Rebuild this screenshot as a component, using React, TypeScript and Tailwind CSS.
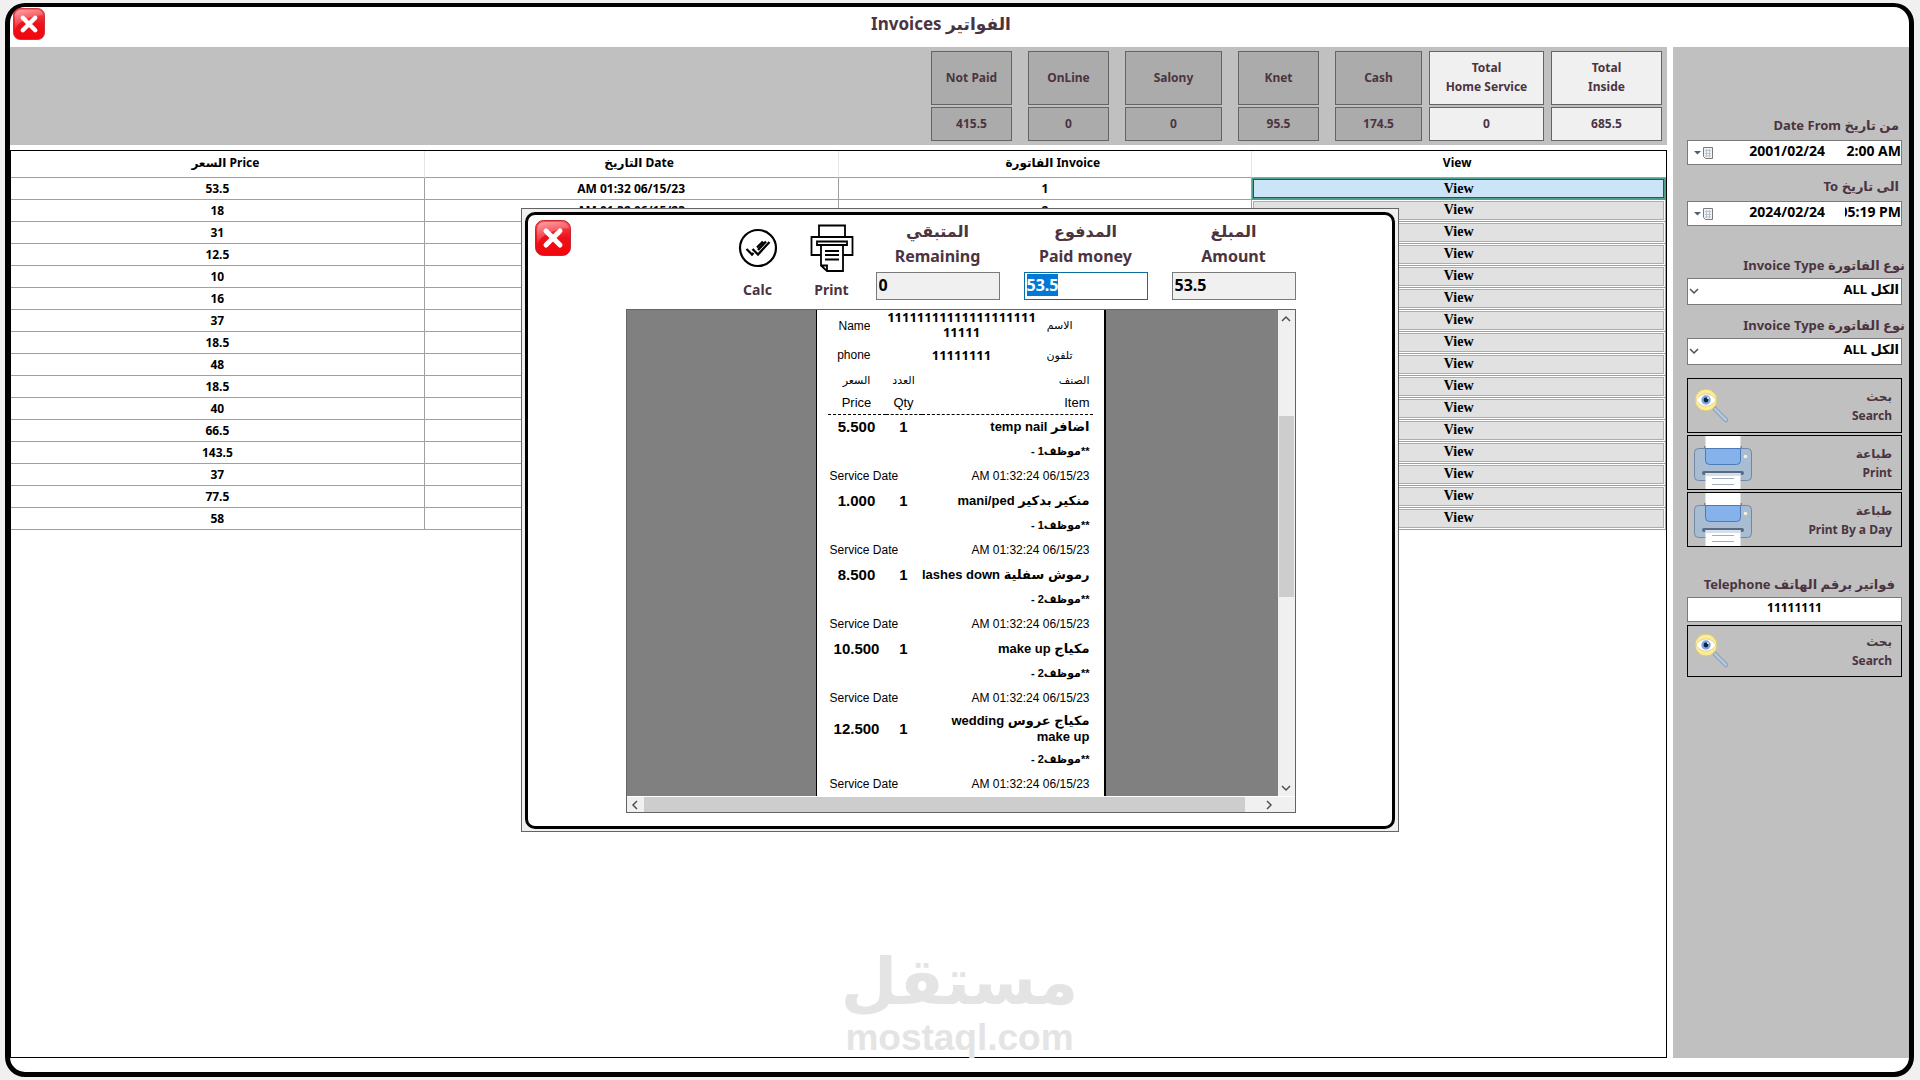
import { useEffect, useRef } from "react";
import type { ReactNode } from "react";

const totals = [
  { label: ["Not Paid"], value: "415.5", width: "w-[81px]", light: false },
  { label: ["OnLine"], value: "0", width: "w-[81px]", light: false },
  { label: ["Salony"], value: "0", width: "w-[97px]", light: false },
  { label: ["Knet"], value: "95.5", width: "w-[81px]", light: false },
  { label: ["Cash"], value: "174.5", width: "w-[87px]", light: false },
];

const grandTotals = [
  { label: ["Total", "Home Service"], value: "0", width: "w-[115px]", light: true },
  { label: ["Total", "Inside"], value: "685.5", width: "w-[111px]", light: true },
];

const prices = [
  "53.5", "18", "31", "12.5", "10", "16", "37", "18.5",
  "48", "18.5", "40", "66.5", "143.5", "37", "77.5", "58",
];

const items = [
  { name: "اضافر temp nail", price: "5.500", employee: "**موظف1 -" },
  { name: "منكير بدكير mani/ped", price: "1.000", employee: "**موظف1 -" },
  { name: "رموش سفلية lashes down", price: "8.500", employee: "**موظف2 -" },
  { name: "مكياج make up", price: "10.500", employee: "**موظف2 -" },
  { name: "مكياج عروس wedding make\u00a0up", price: "12.500", employee: "**موظف2 -", tall: true },
];

function CloseIcon() {
  return (
    <svg viewBox="0 0 36 36" preserveAspectRatio="none" className="block h-full w-full" aria-hidden="true">
      <defs>
        <linearGradient id="closeFill" x1="0" y1="0" x2="0" y2="1">
          <stop offset="0" stopColor="#f4525a" />
          <stop offset="0.5" stopColor="#ee1119" />
          <stop offset="1" stopColor="#f3050c" />
        </linearGradient>
        <linearGradient id="closeShine" x1="0" y1="0" x2="0.4" y2="1">
          <stop offset="0" stopColor="#ffb0b4" stopOpacity="0.9" />
          <stop offset="1" stopColor="#f5535a" stopOpacity="0.3" />
        </linearGradient>
      </defs>
      <rect x="0.5" y="0.5" width="35" height="35" rx="8" fill="url(#closeFill)" stroke="#c9252c" />
      <path d="M2 24V9a7 7 0 0 1 7-7h18a7 7 0 0 1 7 6C24 9 8 12 2 24Z" fill="url(#closeShine)" />
      <path d="m11 11 14 14M25 11 11 25" stroke="#fff" strokeWidth="5" strokeLinecap="round" />
    </svg>
  );
}

function SearchEyeIcon() {
  return (
    <svg viewBox="0 0 36 36" className="h-9 w-9 shrink-0" aria-hidden="true">
      <path d="m21 21 11 11" stroke="#7f97b3" strokeWidth="4.500" strokeLinecap="round" />
      <path d="m21 21 11 11" stroke="#b4c8de" strokeWidth="2.800" strokeLinecap="round" />
      <circle cx="12" cy="12" r="11" fill="#fbeb9a" stroke="#d8c777" />
      <path d="M2 12c5-8 15-8 20 0-5 8-15 8-20 0Z" fill="#fff" stroke="#d9c57a" strokeWidth="0.7" />
      <circle cx="12" cy="12" r="4.7" fill="#78a7e2" />
      <circle cx="12" cy="12" r="2.4" fill="#14213a" />
      <circle cx="14" cy="10" r="1.1" fill="#dcebff" />
    </svg>
  );
}

function PrinterIcon() {
  return (
    <svg viewBox="0 0 58 53" className="h-[53px] w-[58px] shrink-0" aria-hidden="true">
      <path d="M10 16v-6h38v6" fill="#6d8198" />
      <rect x="0.5" y="12.5" width="57" height="32" rx="4" fill="#a8bcd2" stroke="#7088a5" />
      <path d="M11.500 0h35v12h-35z" fill="#fff" />
      <path d="M11.500 12.500h35v12a4 4 0 0 1-4 4h-27a4 4 0 0 1-4-4z" fill="#86b2ec" stroke="#4c79b8" />
      <rect x="8" y="35" width="42" height="4" rx="2" fill="#566b84" />
      <path d="M11.500 37h35v16h-35z" fill="#fff" />
      <path d="M11.500 37h35v3h-35z" fill="#d7e0ea" />
      <path d="M18 42.500h22M18 48.500h22" stroke="#a3adb9" />
      <circle cx="51.500" cy="20.500" r="1.800" fill="#f6f1cf" />
    </svg>
  );
}

function CalcIcon() {
  return (
    <svg viewBox="0 0 40 40" className="h-10 w-10" fill="none" stroke="#000" aria-hidden="true">
      <circle cx="20" cy="20" r="18" strokeWidth="2.200" />
      <path d="m8.500 21 5.500 5.500 1.500-1.500M19 19.500l6-6M14.500 21l5.500 5.500L31.500 14M20 22l8-8.500" strokeWidth="2.300" />
    </svg>
  );
}

function ReceiptPrinterIcon() {
  return (
    <svg viewBox="0 0 44 48" className="h-12 w-11" fill="none" stroke="#000" strokeWidth="1.800" aria-hidden="true">
      <path d="M9 13V1.500h26V13" />
      <path d="M11 31H1.500V13h41v18H33" />
      <path d="M7 17.500h30v3.500H7z" />
      <path d="M11 21v20.500l6 5.500h16V21M11 41.500h6V47" />
      <path d="M15 27h14M15 31h14M15 35.500h14" />
    </svg>
  );
}

function CalendarIcon() {
  return (
    <svg viewBox="0 0 20 14" className="h-[14px] w-5" aria-hidden="true">
      <path d="M0 5h7L3.500 8.500z" fill="#4a5f78" />
      <path d="M9.500 1.500h9v11h-7l-2-2z" fill="#f1f1f1" stroke="#7b7b7b" />
      <path d="M11 4.500h6M11 7.500h6M11 10h6M12.500 3v8M15.500 3v8" stroke="#a9b4c4" strokeWidth="0.700" />
    </svg>
  );
}

function Chevron({ className }: { className: string }) {
  return (
    <svg viewBox="0 0 10 10" className={className} fill="none" stroke="#505050" strokeWidth="1.500" aria-hidden="true">
      <path d="m1 3 4 4 4-4" />
    </svg>
  );
}

function TotalBox({ label, value, width, light }: { label: string[]; value: string; width: string; light: boolean }) {
  const fill = light ? "bg-[#f0f0f0]" : "bg-[#ababab]";
  return (
    <div className={`${width} flex flex-col gap-[2px] text-center text-xs font-bold text-[#4b3440]`}>
      <div className={`${fill} flex h-[54px] flex-col items-center justify-center border border-[#646464] pb-[2px] leading-[19px]`}>
        {label.map((line) => (
          <span key={line}>{line}</span>
        ))}
      </div>
      <div className={`${fill} flex h-[34px] items-center justify-center border border-[#646464] pb-px`}>{value}</div>
    </div>
  );
}

function DateField({ id, label, date, time }: { id: string; label: string; date: string; time: string }) {
  return (
    <div>
      <label htmlFor={id} className="mb-[5px] block h-5 pr-[6px] text-right text-[13px] leading-5 font-bold text-[#4b3440]">
        {label}
      </label>
      <div className="mr-[3px] flex h-[25px] items-center border border-[#7a7a7a] bg-white pl-[6px] text-sm font-bold">
        <button type="button" aria-label="Open calendar">
          <CalendarIcon />
        </button>
        <input id={id} defaultValue={date} className="min-w-0 flex-1 pr-5 pb-1 text-right outline-none" />
        <span className="flex w-14 justify-end overflow-hidden">
          <input aria-label={`${label} time`} defaultValue={time} className="w-20 shrink-0 pb-1 text-right outline-none" />
        </span>
      </div>
    </div>
  );
}

function TypeField({ id }: { id: string }) {
  return (
    <div>
      <label htmlFor={id} className="mb-[3px] block h-5 text-right text-[13px] leading-5 font-bold whitespace-nowrap text-[#4b3440]">
        Invoice Type نوع الفاتورة
      </label>
      <div className="relative mr-[3px]">
        <select
          id={id}
          dir="rtl"
          className="block h-[27px] w-full appearance-none border border-[#7a7a7a] bg-white pr-[2px] pb-1 text-[13px] font-bold outline-none"
        >
          <option>الكل ALL</option>
        </select>
        <Chevron className="pointer-events-none absolute top-2 left-[2px] h-[10px] w-[10px]" />
      </div>
    </div>
  );
}

function SideButton({ arabic, english, icon, height }: { arabic: string; english: string; icon: ReactNode; height: string }) {
  return (
    <button
      type="button"
      className={`${height} mr-[3px] flex items-center justify-between overflow-hidden border border-black pr-[9px] pl-[6px] text-right text-xs leading-[19px] font-bold text-[#4b3440]`}
    >
      {icon}
      <span className="flex flex-col">
        <span>{arabic}</span>
        <span>{english}</span>
      </span>
    </button>
  );
}

function Sidebar() {
  return (
    <aside className="flex w-[236px] shrink-0 flex-col bg-[#c0c0c0] pt-[68px] pr-1 pl-[14px]">
      <DateField id="from" label="Date From من تاريخ" date="2001/02/24" time="12:00 AM" />
      <div className="mt-[11px]">
        <DateField id="to" label="To الى تاريخ" date="2024/02/24" time="05:19 PM" />
      </div>
      <div className="mt-[29px] flex flex-col gap-[10px]">
        <TypeField id="type" />
        <TypeField id="subtype" />
      </div>
      <div className="mt-[13px] flex flex-col gap-[2px]">
        <SideButton arabic="بحث" english="Search" icon={<SearchEyeIcon />} height="h-[55px]" />
        <SideButton arabic="طباعة" english="Print" icon={<PrinterIcon />} height="h-[55px]" />
        <SideButton arabic="طباعة" english="Print By a Day" icon={<PrinterIcon />} height="h-[55px]" />
      </div>
      <div className="mt-[27px] mb-[3px] flex flex-col">
        <label htmlFor="phone" className="mb-[3px] h-5 pr-[10px] text-right text-[13px] leading-5 font-bold whitespace-nowrap text-[#4b3440]">
          Telephone فواتير برقم الهاتف
        </label>
        <input
          id="phone"
          defaultValue="11111111"
          className="mr-[3px] h-[25px] border border-[#7a7a7a] bg-white pb-1 text-center text-xs font-bold outline-none"
        />
      </div>
      <SideButton arabic="بحث" english="Search" icon={<SearchEyeIcon />} height="h-[52px]" />
    </aside>
  );
}

function InvoiceTable() {
  return (
    <table className="w-full table-fixed border-separate border-spacing-0 text-center text-xs font-bold">
      <thead>
        <tr>
          {["السعر Price", "التاريخ Date", "الفاتورة Invoice"].map((title) => (
            <th key={title} className="h-[27px] border-r border-b border-r-[#e5e5e5] border-b-[#a0a0a0] p-0 pb-[2px] pl-4 leading-4">
              {title}
            </th>
          ))}
          <th className="border-b border-[#a0a0a0] p-0 pr-1 pb-[2px] leading-4">View</th>
        </tr>
      </thead>
      <tbody>
        {prices.map((price, i) => (
          <tr key={i}>
            <td className="h-[22px] border-r border-b border-[#a0a0a0] p-0 leading-4">{price}</td>
            <td className="border-r border-b border-[#a0a0a0] p-0 leading-4">AM 01:32 06/15/23</td>
            <td className="border-r border-b border-[#a0a0a0] p-0 leading-4">{i + 1}</td>
            <td className={i === 0 ? "border-r border-b border-[#4da08c] bg-[#4da08c] p-px" : "border-r border-b border-[#a0a0a0] p-px"}>
              <button
                type="button"
                className={
                  i === 0
                    ? "block h-[19px] w-full border border-[#006666] bg-[#cce4f7] font-['Liberation_Serif',serif] text-sm leading-4"
                    : "block h-[19px] w-full border border-[#adadad] bg-[#e1e1e1] pb-[2px] font-['Liberation_Serif',serif] text-sm leading-[14px]"
                }
              >
                View
              </button>
            </td>
          </tr>
        ))}
      </tbody>
    </table>
  );
}

function Receipt() {
  return (
    <div className="h-full w-[290px] shrink-0 overflow-hidden border-r-2 border-l border-black bg-white px-[11px] font-['Liberation_Sans','DejaVu_Sans',sans-serif] text-xs">
      <div className="grid grid-cols-[43px_1fr_52px] items-center whitespace-nowrap">
        <span className="text-right">Name</span>
        <span className="h-[31px] pl-3 text-center font-['Noto_Sans',sans-serif] text-[13px] leading-[15px] font-bold">
          11111111111111111111
          <br />
          11111
        </span>
        <span className="pr-5 text-right text-[11px]">الاسم</span>
        <span className="text-right">phone</span>
        <span className="h-7 pl-3 text-center font-['Noto_Sans',sans-serif] text-[13px] leading-7 font-bold">11111111</span>
        <span className="pr-5 text-right text-[11px]">تلفون</span>
      </div>
      <table className="w-full table-fixed border-collapse">
        <colgroup>
          <col className="w-[58px]" />
          <col className="w-9" />
          <col />
        </colgroup>
        <thead className="border-b border-dashed border-black text-[13px] font-normal">
          <tr className="h-[22px] text-[11px]">
            <td className="text-center">السعر</td>
            <td className="text-center">العدد</td>
            <td className="pr-[3px] text-right">الصنف</td>
          </tr>
          <tr className="h-[23px]">
            <th className="font-normal">Price</th>
            <th className="font-normal">Qty</th>
            <th className="pr-[3px] text-right font-normal">Item</th>
          </tr>
        </thead>
        {items.map((item) => (
          <tbody key={item.name}>
            <tr className={item.tall ? "h-[37px] font-bold" : "h-[25px] font-bold"}>
              <td className="p-0 text-center text-[15px] leading-4">{item.price}</td>
              <td className="p-0 text-center text-[15px] leading-4">1</td>
              <td dir="rtl" className="p-0 pr-[3px] text-right text-[13px] leading-4">
                {item.name}
              </td>
            </tr>
            <tr className="h-[25px]">
              <td colSpan={3} dir="rtl" className="p-0 pr-[3px] text-right text-[11px] font-bold">
                {item.employee}
              </td>
            </tr>
            <tr className="h-6">
              <td colSpan={2} className="p-0 pl-[2px]">Service Date</td>
              <td className="p-0 pr-[3px] text-right">AM 01:32:24 06/15/23</td>
            </tr>
          </tbody>
        ))}
      </table>
    </div>
  );
}

function PaymentDialog() {
  const paidRef = useRef<HTMLInputElement>(null);

  useEffect(() => {
    paidRef.current?.focus();
    paidRef.current?.select();
  }, []);

  const caption = "flex flex-col text-center text-base leading-[25px] font-bold text-[#4b3440]";
  const box = "mt-[3px] block h-7 w-[124px] border px-[2px] pb-[2px] text-left text-base font-bold text-black outline-none";

  return (
    <div
      role="dialog"
      aria-label="Payment"
      className="absolute top-[201px] left-1/2 w-[878px] -translate-x-1/2 border border-[#646464] bg-[#f0f0f0] px-[3px] pt-[3px] pb-[2px]"
    >
      <div className="rounded-[10px] border-[3px] border-black bg-white pr-24 pb-[13px]">
        <div className="flex h-[94px] items-start pl-[7px]">
          <button type="button" aria-label="Close payment" className="mt-[5px] h-9 w-9">
            <CloseIcon />
          </button>
          <div className="ml-auto flex gap-[14px] pt-[9px] pr-[14px]">
            <button type="button" className="flex w-[60px] flex-col items-center gap-2 text-sm font-bold text-[#4b3440]">
              <span className="flex h-12 items-center">
                <CalcIcon />
              </span>
              <span className="leading-5">Calc</span>
            </button>
            <button type="button" className="flex w-[60px] flex-col items-center gap-2 text-sm font-bold text-[#4b3440]">
              <ReceiptPrinterIcon />
              <span className="leading-5">Print</span>
            </button>
          </div>
          <div className="flex gap-6 pt-1">
            <label className={caption}>
              <span>المتبقي</span>
              <span>Remaining</span>
              <input readOnly defaultValue="0" className={`${box} border-[#7a7a7a] bg-[#f0f0f0]`} />
            </label>
            <label className={caption}>
              <span>المدفوع</span>
              <span>Paid money</span>
              <input
                ref={paidRef}
                defaultValue="53.5"
                className={`${box} border-[#0a6f9e] bg-white selection:bg-[#0078d7] selection:text-white`}
              />
            </label>
            <label className={caption}>
              <span>المبلغ</span>
              <span>Amount</span>
              <input readOnly defaultValue="53.5" className={`${box} border-[#7a7a7a] bg-[#f0f0f0]`} />
            </label>
          </div>
        </div>

        <div className="ml-[98px] flex h-[504px] flex-col border border-[#646464] bg-[#f0f0f0]">
          <div className="flex min-h-0 flex-1">
            <div className="flex flex-1 justify-center bg-[#808080] pl-[17px]">
              <Receipt />
            </div>
            <div className="flex w-[17px] flex-col items-center">
              <button type="button" aria-label="Scroll up" className="flex h-[17px] items-center">
                <Chevron className="h-[10px] w-[10px] rotate-180" />
              </button>
              <div className="mt-[89px] h-[181px] w-[15px] bg-[#cdcdcd]" />
              <button type="button" aria-label="Scroll down" className="mt-auto flex h-[17px] items-center">
                <Chevron className="h-[10px] w-[10px]" />
              </button>
            </div>
          </div>
          <div className="flex h-4 items-center border-t border-white pr-[17px]">
            <button type="button" aria-label="Scroll left" className="flex w-[17px] justify-center">
              <Chevron className="h-[10px] w-[10px] rotate-90" />
            </button>
            <div className="h-[15px] w-[601px] bg-[#cdcdcd]" />
            <button type="button" aria-label="Scroll right" className="ml-auto flex w-[17px] justify-center">
              <Chevron className="h-[10px] w-[10px] -rotate-90" />
            </button>
          </div>
        </div>
      </div>
    </div>
  );
}

export default function App() {
  return (
    <div className="flex min-h-screen bg-[#f0f0f0] pt-[3px] pr-[6px] pb-[3px] pl-[5px] font-['Noto_Sans','DejaVu_Sans',sans-serif] text-black">
      <main className="relative flex flex-1 flex-col rounded-[20px] border-[5px] border-t-4 border-black bg-white pb-[14px]">
        <header className="flex h-10 items-start pt-px pl-[3px]">
          <button type="button" aria-label="Close" className="h-8 w-8 shrink-0">
            <CloseIcon />
          </button>
          <h1 className="flex-1 pr-[72px] text-center text-[17px] leading-8 font-bold text-[#4b3440]">Invoices الفواتير</h1>
        </header>

        <div className="flex flex-1 gap-[6px]">
          <div className="flex min-w-0 flex-1 flex-col">
            <div className="flex h-[98px] justify-end gap-[7px] bg-[#c0c0c0] pt-1 pr-[5px]">
              <div className="flex gap-4">
                {totals.map((t) => (
                  <TotalBox key={t.label[0]} {...t} />
                ))}
              </div>
              {grandTotals.map((t) => (
                <TotalBox key={t.label[1]} {...t} />
              ))}
            </div>
            <section className="mt-[5px] flex-1 border border-black">
              <InvoiceTable />
            </section>
          </div>
          <Sidebar />
        </div>

        <PaymentDialog />

        <div className="pointer-events-none absolute bottom-[14px] left-1/2 flex -translate-x-1/2 flex-col items-center font-bold text-[#e4e4e4]">
          <span className="font-['DejaVu_Sans',sans-serif] text-[65px] leading-[72px]">مستقل</span>
          <span className="font-['Liberation_Sans',sans-serif] text-[37px] leading-10">mostaql.com</span>
        </div>
      </main>
    </div>
  );
}
